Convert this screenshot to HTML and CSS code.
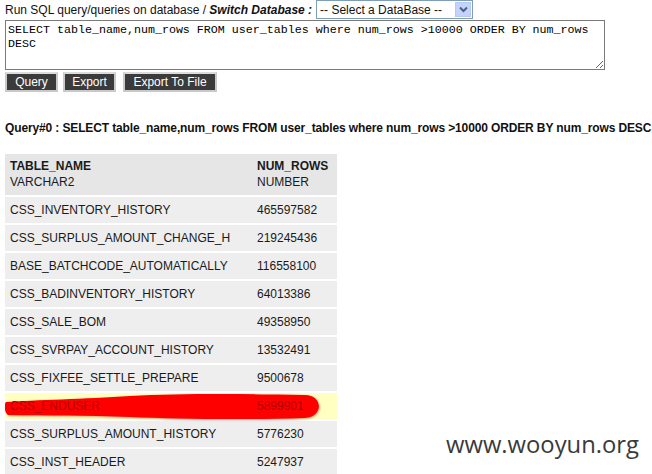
FILE: index.html
```html
<!DOCTYPE html>
<html>
<head>
<meta charset="utf-8">
<link rel="stylesheet" href="styles.css">
</head>
<body>
<div class="page">
  <div class="topline">
    <span class="lbl">Run SQL query/queries on database / <b><i>Switch Database :</i></b></span>
    <div class="sel">
      <span class="sel-text">-- Select a DataBase --</span>
      <span class="sel-btn"><svg width="9" height="7" viewBox="0 0 9 7"><path d="M1 1.5 L4.5 5 L8 1.5" fill="none" stroke="#4d6185" stroke-width="2"/></svg></span>
    </div>
  </div>
  <textarea class="sql" readonly>SELECT table_name,num_rows FROM user_tables where num_rows >10000 ORDER BY num_rows DESC</textarea>
  <div class="buttons">
    <span class="btn w52">Query</span>
    <span class="btn w52">Export</span>
    <span class="btn w93">Export To File</span>
  </div>
  <div class="qtitle">Query#0 : SELECT table_name,num_rows FROM user_tables where num_rows &gt;10000 ORDER BY num_rows DESC</div>
  <table class="res">
    <tr class="head"><td class="c1"><b>TABLE_NAME</b><br>VARCHAR2</td><td class="c2"><b>NUM_ROWS</b><br>NUMBER</td></tr>
    <tr><td class="c1">CSS_INVENTORY_HISTORY</td><td class="c2">465597582</td></tr>
    <tr><td class="c1">CSS_SURPLUS_AMOUNT_CHANGE_H</td><td class="c2">219245436</td></tr>
    <tr><td class="c1">BASE_BATCHCODE_AUTOMATICALLY</td><td class="c2">116558100</td></tr>
    <tr><td class="c1">CSS_BADINVENTORY_HISTORY</td><td class="c2">64013386</td></tr>
    <tr><td class="c1">CSS_SALE_BOM</td><td class="c2">49358950</td></tr>
    <tr><td class="c1">CSS_SVRPAY_ACCOUNT_HISTORY</td><td class="c2">13532491</td></tr>
    <tr><td class="c1">CSS_FIXFEE_SETTLE_PREPARE</td><td class="c2">9500678</td></tr>
    <tr class="hl"><td class="c1 redact"><svg class="blob" width="320" height="28" viewBox="0 0 320 28"><path d="M1 9 C30 7 80 6 125 3 C180 0 250 1 300 2 C318 2 319 24 300 25 C240 27 170 26 125 24 C80 22 40 23 3 22 C-1 19 -1 11 1 9 Z" fill="#ff0000"/></svg><span class="rtxt">CSS_ENDUSER</span></td><td class="c2"><span class="rtxt">5899901</span></td></tr>
    <tr><td class="c1">CSS_SURPLUS_AMOUNT_HISTORY</td><td class="c2">5776230</td></tr>
    <tr><td class="c1">CSS_INST_HEADER</td><td class="c2">5247937</td></tr>
  </table>
  <div class="mark">www.wooyun.org</div>
</div>
</body>
</html>
```
FILE: styles.css
```css
html, body {
  margin: 0;
  padding: 0;
  background: #fff;
  overflow: hidden;
}
.page {
  position: relative;
  width: 652px;
  height: 474px;
  padding: 0 5px;
  box-sizing: border-box;
  font-family: "Liberation Sans", Arial, sans-serif;
  font-size: 12px;
  color: #111;
  overflow: hidden;
}
.topline {
  display: flex;
  align-items: center;
  height: 19px;
}
.lbl {
  white-space: nowrap;
  margin-right: 4px;
}
.sel {
  display: flex;
  align-items: center;
  justify-content: space-between;
  width: 157px;
  height: 19px;
  box-sizing: border-box;
  border: 1px solid #7f9db9;
  padding: 0 1px 0 3px;
  font-size: 12px;
}
.sel-btn {
  display: flex;
  align-items: center;
  justify-content: center;
  width: 16px;
  height: 15px;
  background: #c3d3fd;
  border: 1px solid #b7c9f0;
  box-sizing: border-box;
}
.sql {
  display: block;
  margin: 1px 0 0 0;
  width: 600px;
  height: 50px;
  box-sizing: border-box;
  border: 1px solid #7a7a7a;
  padding: 2px;
  font-family: "Liberation Mono", "Courier New", monospace;
  font-size: 11.67px;
  line-height: 14px;
  color: #000;
  resize: both;
  overflow: hidden;
  outline: none;
}
.buttons {
  display: flex;
  gap: 5px;
  margin-top: 2px;
}
.btn {
  display: flex;
  align-items: center;
  justify-content: center;
  height: 20px;
  box-sizing: border-box;
  background: #3b3b3b;
  border: 2px solid #c9c9c9;
  border-top-color: #dcdcdc;
  color: #fff;
  font-size: 12px;
}
.w52 { width: 53px; }
.w93 { width: 94px; }
.btn.w93 { margin-left: 2px; }
.qtitle {
  margin-top: 29px;
  font-weight: bold;
  font-size: 12px;
  line-height: 14px;
  white-space: nowrap;
  letter-spacing: -0.13px;
}
.res {
  margin-top: 19px;
  border-collapse: collapse;
  border-spacing: 0;
  width: 332px;
}
.res td {
  background: #eeeeee;
  border-top: 2px solid #fff;
  height: 26px;
  padding: 0 0 0 5px;
  line-height: 14px;
  vertical-align: middle;
  white-space: nowrap;
  color: #1a1a1a;
}
.res td.c1 { width: 242px; }
.res td.c2 { width: 80px; }
.res tr.head td {
  background: #e6e6e6;
  border-top: none;
  height: 42px;
  line-height: 16px;
  padding-top: 1px;
  padding-bottom: 3px;
  box-sizing: border-box;
}
.res tr.hl td {
  background: #ffffc2;
}
.redact {
  position: relative;
}
.blob {
  position: absolute;
  left: 0;
  top: 0;
  z-index: 0;
  filter: drop-shadow(1px 1px 1px rgba(120,0,0,0.35));
}
.rtxt {
  position: relative;
  z-index: 1;
  color: #b00000;
}
.mark {
  position: absolute;
  left: 446px;
  top: 429px;
  font-family: "Open Sans", "Noto Sans", sans-serif;
  font-size: 23.8px;
  color: #3a3a3a;
  line-height: 30px;
  white-space: nowrap;
}
```
